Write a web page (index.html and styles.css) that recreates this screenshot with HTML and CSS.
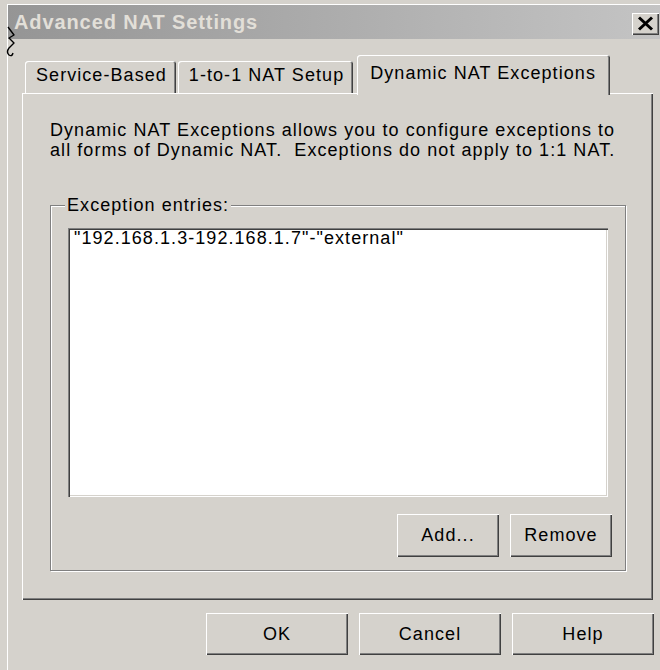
FILE: index.html
```html
<!DOCTYPE html>
<html lang="en">
<head>
<meta charset="utf-8">
<title>Advanced NAT Settings</title>
<link rel="stylesheet" href="styles.css">
</head>
<body>
<div class="window">
  <div class="titlebar">
    <span class="title">Advanced NAT Settings</span>
    <button class="close" aria-label="Close">
      <svg width="17" height="15" viewBox="0 0 17 15"><path d="M2 1.5 L15 13.5 M15 1.5 L2 13.5" stroke="#000" stroke-width="3" fill="none"/></svg>
    </button>
  </div>

  <div class="content">
    <div class="tabs">
      <div class="tab">Service-Based</div>
      <div class="tab">1-to-1 NAT Setup</div>
      <div class="tab active">Dynamic NAT Exceptions</div>
    </div>

    <div class="panel">
      <p class="desc">Dynamic NAT Exceptions allows you to configure exceptions to<br>all forms of Dynamic NAT.&nbsp; Exceptions do not apply to 1:1 NAT.</p>

      <div class="group">
        <span class="legend">Exception entries:</span>
        <div class="listbox">
          <div class="item">"192.168.1.3-192.168.1.7"-"external"</div>
        </div>
        <div class="group-actions">
          <button class="btn">Add...</button>
          <button class="btn">Remove</button>
        </div>
      </div>
    </div>

    <div class="dialog-actions">
      <button class="btn btn-lg">OK</button>
      <button class="btn btn-lg">Cancel</button>
      <button class="btn btn-lg">Help</button>
    </div>
  </div>

  <svg class="cursor" width="12" height="32" viewBox="0 0 12 32">
    <path d="M3 1 L9 9 L4 12 L9 17 L4 22 Q1 26 4 29 Q7 31 8 27" stroke="#000" stroke-width="1.4" fill="none" stroke-linejoin="round"/>
  </svg>
</div>
</body>
</html>
```

FILE: styles.css
```css
* {
  box-sizing: border-box;
}

html,
body {
  margin: 0;
}

body {
  width: 660px;
  height: 670px;
  overflow: hidden;
  background: #d5d2cc;
  font-family: "Liberation Sans", Arial, sans-serif;
  font-size: 18px;
  letter-spacing: 1.06px;
  color: #000;
}

button {
  font: inherit;
  letter-spacing: inherit;
  color: inherit;
}

/* dialog frame */
.window {
  position: relative;
  height: 666px;
  margin: 4px 0 0 7px;
  border-top: 1px solid #fff;
  border-left: 1px solid #fff;
}

.titlebar {
  display: flex;
  align-items: center;
  justify-content: space-between;
  height: 34px;
  padding: 0 1px 0 6px;
  background: linear-gradient(to right, #959595, #c4c4c4);
}

.title {
  font-size: 20px;
  font-weight: bold;
  letter-spacing: 0.9px;
  line-height: 34px;
  color: #e2dfd8;
}

.close {
  display: flex;
  align-items: center;
  justify-content: center;
  width: 27px;
  height: 22px;
  margin-top: 3px;
  padding: 0;
  border: 0;
  background: #d5d2cc;
  box-shadow: inset 1px 1px 0 #fff, inset -1px -1px 0 #404040, inset -2px -2px 0 #808080;
}

.content {
  padding: 16px 7px 0 14px;
}

/* tab strip */
.tabs {
  position: relative;
  z-index: 1;
  display: flex;
  align-items: flex-end;
  height: 38px;
  padding-left: 3px;
}

.tab {
  height: 32px;
  padding: 4px 9px 0 11px;
  line-height: 20px;
  white-space: nowrap;
  background: #d5d2cc;
  border-radius: 3px 3px 0 0;
  box-shadow: inset 1px 1px 0 #fff, inset -1px 0 0 #404040, inset -2px 0 0 #808080;
}

.tab + .tab {
  margin-left: 2px;
}

.tab.active {
  height: 40px;
  margin-bottom: -2px;
  margin-left: 4px;
  padding: 8px 14px 0 13px;
}

/* tab page */
.panel {
  height: 507px;
  padding: 27px 27px 0 28px;
  background: #d5d2cc;
  box-shadow: inset 1px 1px 0 #fff, inset -1px -1px 0 #404040, inset -2px -2px 0 #808080;
}

.desc {
  margin: 0;
  line-height: 20px;
  white-space: nowrap;
}

.group {
  position: relative;
  margin-top: 45px;
  padding: 22px 17px 13px 17px;
  border: 1px solid #808080;
  box-shadow: inset 1px 1px 0 #fff, 1px 1px 0 #fff;
}

.legend {
  position: absolute;
  top: -11px;
  left: 14px;
  padding: 0 2px;
  line-height: 20px;
  background: #d5d2cc;
}

.listbox {
  height: 269px;
  padding: 0 6px;
  background: #fff;
  box-shadow: inset 1px 1px 0 #808080, inset 2px 2px 0 #404040, inset -1px -1px 0 #fff, inset -2px -2px 0 #d5d2cc;
}

.item {
  line-height: 20px;
  white-space: nowrap;
}

.group-actions {
  display: flex;
  justify-content: flex-end;
  gap: 11px;
  margin-top: 17px;
  margin-right: -4px;
}

.btn {
  display: flex;
  align-items: center;
  justify-content: center;
  width: 102px;
  height: 43px;
  padding: 0;
  border: 0;
  background: #d5d2cc;
  box-shadow: inset 1px 1px 0 #fff, inset -1px -1px 0 #404040, inset -2px -2px 0 #808080;
}

.dialog-actions {
  display: flex;
  justify-content: flex-end;
  gap: 11px;
  margin-top: 13px;
  margin-right: -1px;
}

.btn-lg {
  width: 142px;
  height: 42px;
}

/* mouse pointer resting on the frame */
.cursor {
  position: absolute;
  top: 21px;
  left: -3px;
}
```
